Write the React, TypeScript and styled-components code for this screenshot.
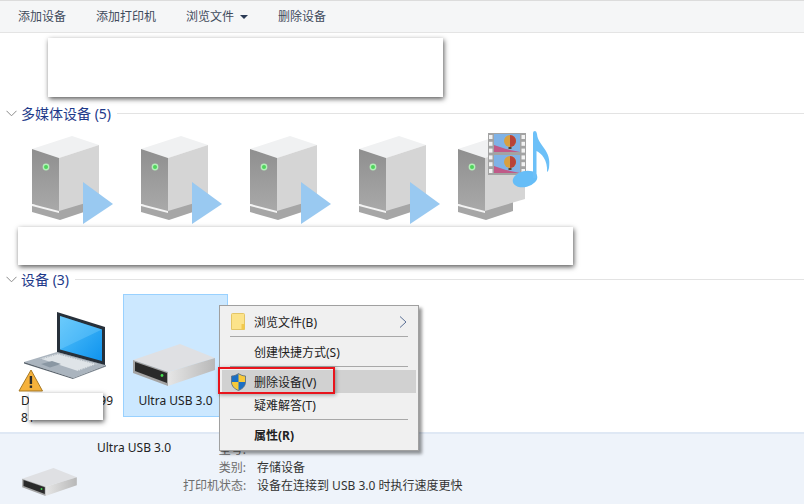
import React from 'react';
import styled, { createGlobalStyle } from 'styled-components';

const GlobalStyle = createGlobalStyle`
  html, body {
    margin: 0;
    padding: 0;
    background: #fff;
  }
  body {
    font-family: "Noto Sans", "Noto Sans CJK SC", sans-serif;
    font-size: 12px;
  }
`;

const Page = styled.div`
  position: relative;
  display: flex;
  flex-direction: column;
  width: 804px;
  height: 504px;
  overflow: hidden;
  background: #fff;
`;

const Toolbar = styled.div`
  display: flex;
  align-items: center;
  gap: 30px;
  height: 31px;
  padding-left: 18px;
  background: #f5f6f7;
  border-top: 1px solid #dcdcdc;
  border-bottom: 1px solid #e4e4e4;
`;

const ToolButton = styled.span`
  display: flex;
  align-items: center;
  color: #3f4b5c;
  line-height: 16px;
`;

const Caret = styled.i`
  width: 0;
  height: 0;
  margin-left: 6px;
  border-left: 4px solid transparent;
  border-right: 4px solid transparent;
  border-top: 4px solid #2b3a55;
`;

const SectionHeader = styled.div<{ $top: number }>`
  display: flex;
  align-items: center;
  height: 20px;
  margin-top: ${({ $top }) => $top}px;
  padding-left: 6px;
  color: #1e3a8a;
  font-size: 14px;
  white-space: nowrap;

  &::after {
    content: '';
    flex: 1;
    height: 1px;
    margin-left: 6px;
    background: #e3e3e3;
  }
`;

const SectionTitle = styled.span`
  margin-left: 4px;
`;

const MediaRow = styled.div`
  display: flex;
  gap: 19px;
  height: 100px;
  margin-top: 7px;
  padding-left: 28px;

  svg:last-child {
    margin-left: -10px;
  }
`;

const DeviceRow = styled.div`
  display: flex;
  align-items: flex-start;
  gap: 10px;
  margin-top: 5px;
  padding-left: 15px;
`;

const Tile = styled.div<{ $width: number; $selected?: boolean }>`
  box-sizing: border-box;
  width: ${({ $width }) => $width}px;
  height: ${({ $selected }) => ($selected ? '123px' : 'auto')};
  background: ${({ $selected }) => ($selected ? '#cce8ff' : 'transparent')};
  border: 1px solid ${({ $selected }) => ($selected ? '#99d1ff' : 'transparent')};

  svg {
    display: block;
  }
`;

const TileLabel = styled.div`
  color: #222;
  line-height: 17px;
  text-align: center;
  white-space: nowrap;
`;

const SplitLine = styled.div`
  display: flex;
  justify-content: space-between;
  width: 92px;
  margin-left: 5px;
  color: #222;
  line-height: 17px;
`;

const WrapLine = styled.div`
  margin-left: 5px;
  color: #222;
  line-height: 17px;
`;

const Details = styled.div`
  display: flex;
  box-sizing: border-box;
  height: 72px;
  margin-top: auto;
  padding: 6px 0 0 22px;
  background: #eef3fa;
  border-top: 2px solid #dfe8f4;
`;

const Thumb = styled.div`
  width: 75px;
  padding-top: 28px;
`;

const DeviceName = styled.div`
  width: 86px;
  color: #222;
  line-height: 16px;
`;

const Properties = styled.div`
  display: grid;
  grid-template-columns: 63px auto;
  grid-auto-rows: 18px;
  column-gap: 11px;
  align-items: center;
  align-self: flex-start;
  white-space: nowrap;
`;

const PropLabel = styled.span`
  color: #6d6d6d;
  text-align: right;
`;

const PropValue = styled.span`
  color: #333;
`;

const Redaction = styled.div<{ $x: number; $y: number; $w: number; $h: number }>`
  position: absolute;
  left: ${({ $x }) => $x}px;
  top: ${({ $y }) => $y}px;
  width: ${({ $w }) => $w}px;
  height: ${({ $h }) => $h}px;
  background: #fff;
  box-shadow: 1px 2px 5px rgba(0, 0, 0, 0.65);
`;

const Menu = styled.div`
  position: absolute;
  left: 219px;
  top: 305px;
  box-sizing: border-box;
  width: 200px;
  height: 146px;
  padding: 4px 2px;
  background: #f0f0f0;
  border: 1px solid #a0a0a0;
  box-shadow: 3px 3px 3px rgba(0, 0, 0, 0.4);
`;

const MenuItem = styled.div<{ $active?: boolean; $bold?: boolean }>`
  display: flex;
  align-items: center;
  height: 23px;
  padding: 0 9px;
  color: #222;
  font-weight: ${({ $bold }) => ($bold ? 700 : 400)};
  background: ${({ $active }) => ($active ? '#d1d1d1' : 'transparent')};
`;

const MenuIconSlot = styled.span`
  display: flex;
  align-items: center;
  width: 23px;
  height: 18px;
`;

const Submenu = styled.svg`
  margin-left: auto;
`;

const MenuSeparator = styled.div`
  height: 1px;
  margin: 3px 8px 3px 8px;
  background: #a8a8a8;
`;

const Highlight = styled.div`
  position: absolute;
  left: 218px;
  top: 367px;
  box-sizing: border-box;
  width: 117px;
  height: 27px;
  border: 2px solid #e8141c;
  box-shadow: 1px 1px 4px rgba(0, 0, 0, 0.35);
`;

const Chevron = () => (
  <svg width="11" height="7" viewBox="0 0 11 7">
    <path d="M0.5 0.8 L5.5 5.8 L10.5 0.8" fill="none" stroke="#8a8a8a" strokeWidth="1" />
  </svg>
);

const ServerBody = () => (
  <>
    <path d="M32 205 L32 212 L60 220 L87 211 L87 200 Z" fill="#a6a6a6" />
    <path d="M32 149 L72 136 L99 145 L59 158 Z" fill="#f0f1f2" />
    <path d="M32 149 L59 158 L59 211 L32 204 Z" fill="url(#serverFront)" />
    <path d="M59 158 L99 145 L99 199 L59 211 Z" fill="#d5d5d5" />
    <path d="M32 204 L59 211 L59 213 L32 206 Z" fill="#f4f4f4" />
    <circle cx="46" cy="167" r="3.4" fill="#b4f0b8" />
    <circle cx="46" cy="167" r="2" fill="#4fd45c" />
  </>
);

const ServerDefs = () => (
  <defs>
    <linearGradient id="serverFront" x1="0" y1="0" x2="0" y2="1">
      <stop offset="0" stopColor="#8f8f8f" />
      <stop offset="1" stopColor="#a9a9a9" />
    </linearGradient>
  </defs>
);

const StreamServer = () => (
  <svg width="90" height="100" viewBox="28 130 90 100">
    <ServerDefs />
    <ServerBody />
    <path d="M83 182 L113 204 L83 224 Z" fill="#99c9f1" />
  </svg>
);

const FilmFrame = ({ y }: { y: number }) => (
  <>
    <rect x="68" y={y} width="26" height="18" fill="#7fb2e6" />
    <path d={`M68 ${y + 18} L68 ${y + 11} L80 ${y + 15} L94 ${y + 18} Z`} fill="#c05a88" />
    <circle cx="84" cy={y + 7} r="6" fill="#d9a040" />
    <path d={`M84 ${y + 1} A6 6 0 0 1 84 ${y + 13} Z`} fill="#b8433a" />
    <rect x="82.5" y={y + 13} width="3" height="2" fill="#55402e" />
  </>
);

const MediaServer = () => (
  <svg width="125" height="100" viewBox="28 130 125 100" style={{ overflow: 'visible' }}>
    <ServerDefs />
    <ServerBody />
    <rect x="62" y="133" width="38" height="42" fill="#a3a3a3" />
    {[0, 1, 2, 3, 4, 5].map(i => (
      <React.Fragment key={i}>
        <rect x="63" y={135 + i * 6.8} width="3.5" height="4" fill="#f2f2f2" />
        <rect x="95.5" y={135 + i * 6.8} width="3.5" height="4" fill="#f2f2f2" />
      </React.Fragment>
    ))}
    <FilmFrame y={134} />
    <FilmFrame y={155} />
    <ellipse cx="99" cy="179" rx="12.5" ry="8" transform="rotate(-14 99 179)" fill="#66bdf7" />
    <path
      d="M107 178 L107 133 Q107 131 109 131 Q110.5 131 111 134 C112 146 126 150 123 168 Q122.5 171 121 172 C122 160 115 153 110.5 151 L110.5 178 Z"
      fill="#6cc0f8"
    />
  </svg>
);

const LaptopIcon = () => (
  <svg width="96" height="97" viewBox="16 295 96 97">
    <defs>
      <linearGradient id="laptopScreen" x1="0" y1="0" x2="1" y2="1">
        <stop offset="0" stopColor="#5cc4fa" />
        <stop offset="0.55" stopColor="#2fa9f4" />
        <stop offset="1" stopColor="#0f93ee" />
      </linearGradient>
    </defs>
    <path d="M24 362 L57 352 L106 365 L73 378 Z" fill="#aab4be" />
    <path d="M24 362 L73 378 L73 379 L24 363.5 Z" fill="#59636d" />
    <path d="M73 378 L106 365 L106 366.5 L73 379 Z" fill="#7b858f" />
    <path d="M40 358.5 L58 353.5 L97 364 L78 371 Z" fill="#dfe4e8" />
    <path d="M41 359 L58 354 L96 364.2 L78 370.5" fill="none" stroke="#8d98a3" strokeWidth="0.5" strokeDasharray="1.5 1" />
    <path d="M41 364 L52 361 L61 364 L50 367.5 Z" fill="#8a97a3" />
    <path d="M57 312 L105 327 L105 365 L57 352 Z" fill="#27303a" />
    <path d="M60 316 L102 329.5 L102 361 L60 349.5 Z" fill="url(#laptopScreen)" />
    <path d="M60 316 L102 329.5 L60 349.5 Z" fill="#8ddcff" opacity="0.3" />
    <path d="M31 370 L42.5 391 L19 391 Z" fill="#f6b23c" stroke="#a97a24" strokeWidth="1" strokeLinejoin="round" />
    <rect x="29.7" y="376" width="2.4" height="8" fill="#2b2b2b" />
    <rect x="29.7" y="385.5" width="2.4" height="2.4" fill="#2b2b2b" />
  </svg>
);

const DriveIcon = ({ width, height, viewBox }: { width: number; height: number; viewBox: string }) => (
  <svg width={width} height={height} viewBox={viewBox}>
    <defs>
      <linearGradient id="driveSide" x1="0" y1="0" x2="1" y2="0">
        <stop offset="0" stopColor="#e6e6e6" />
        <stop offset="1" stopColor="#b8b8b8" />
      </linearGradient>
    </defs>
    <path d="M133 360 L180 344 L215 358 L168 372 Z" fill="#dfe0e3" />
    <path d="M168 372 L215 358 L215 370 L168 386 Z" fill="url(#driveSide)" />
    <path d="M133 360 L168 372 L168 386 L133 373 Z" fill="#a4a4a4" />
    <path d="M135 362 L167 373 L167 383 L135 371 Z" fill="#2a2a2a" />
    <circle cx="162" cy="375.5" r="1.4" fill="#45e04f" />
  </svg>
);

const FolderIcon = () => (
  <svg width="14" height="17" viewBox="0 0 14 17">
    <path d="M0.5 1.5 Q0.5 0.5 1.5 0.5 L12.5 0.5 Q13.5 0.5 13.5 1.5 L13.5 16.5 L0.5 16.5 Z" fill="#fce38a" stroke="#e3c566" />
    <rect x="10.5" y="11" width="3" height="5.5" fill="#f2c94c" />
  </svg>
);

const ShieldIcon = () => (
  <svg width="15" height="18" viewBox="0 0 15 18">
    <defs>
      <clipPath id="shieldOutline">
        <path d="M7.5 0.5 C5.5 2 3 3 0.5 3 L0.5 9 C0.5 13 3.5 16 7.5 17.5 C11.5 16 14.5 13 14.5 9 L14.5 3 C12 3 9.5 2 7.5 0.5 Z" />
      </clipPath>
    </defs>
    <g clipPath="url(#shieldOutline)">
      <rect width="15" height="18" fill="#1c6fc4" />
      <rect x="7.5" y="0" width="8" height="9" fill="#f8c93a" />
      <rect x="0" y="9" width="7.5" height="9" fill="#f8c93a" />
    </g>
    <path d="M7.5 0.5 C5.5 2 3 3 0.5 3 L0.5 9 C0.5 13 3.5 16 7.5 17.5 C11.5 16 14.5 13 14.5 9 L14.5 3 C12 3 9.5 2 7.5 0.5 Z" fill="none" stroke="#5f6f80" strokeWidth="0.8" />
  </svg>
);

export default function App() {
  return (
    <Page>
      <GlobalStyle />
      <Toolbar>
        <ToolButton>添加设备</ToolButton>
        <ToolButton>添加打印机</ToolButton>
        <ToolButton>
          浏览文件
          <Caret />
        </ToolButton>
        <ToolButton>删除设备</ToolButton>
      </Toolbar>

      <SectionHeader $top={70}>
        <Chevron />
        <SectionTitle>多媒体设备 (5)</SectionTitle>
      </SectionHeader>
      <MediaRow>
        <StreamServer />
        <StreamServer />
        <StreamServer />
        <StreamServer />
        <MediaServer />
      </MediaRow>

      <SectionHeader $top={39}>
        <Chevron />
        <SectionTitle>设备 (3)</SectionTitle>
      </SectionHeader>
      <DeviceRow>
        <Tile $width={98}>
          <LaptopIcon />
          <SplitLine>
            <span>D</span>
            <span>99</span>
          </SplitLine>
          <WrapLine>81</WrapLine>
        </Tile>
        <Tile $width={105} $selected>
          <DriveIcon width={103} height={97} viewBox="124 295 103 97" />
          <TileLabel>Ultra USB 3.0</TileLabel>
        </Tile>
      </DeviceRow>

      <Details>
        <Thumb>
          <DriveIcon width={55} height={28} viewBox="133 344 82 42" />
        </Thumb>
        <DeviceName>Ultra USB 3.0</DeviceName>
        <Properties>
          <PropLabel>型号:</PropLabel>
          <PropValue />
          <PropLabel>类别:</PropLabel>
          <PropValue>存储设备</PropValue>
          <PropLabel>打印机状态:</PropLabel>
          <PropValue>设备在连接到 USB 3.0 时执行速度更快</PropValue>
        </Properties>
      </Details>

      <Redaction $x={48} $y={38} $w={395} $h={59} />
      <Redaction $x={18} $y={227} $w={555} $h={38} />
      <Redaction $x={29} $y={393} $w={74} $h={27} />

      <Menu>
        <MenuItem>
          <MenuIconSlot>
            <FolderIcon />
          </MenuIconSlot>
          浏览文件(B)
          <Submenu width="8" height="12" viewBox="0 0 8 12">
            <path d="M1 0.5 L7 6 L1 11.5" fill="none" stroke="#5a6f95" strokeWidth="1" />
          </Submenu>
        </MenuItem>
        <MenuSeparator />
        <MenuItem>
          <MenuIconSlot />
          创建快捷方式(S)
        </MenuItem>
        <MenuSeparator />
        <MenuItem $active>
          <MenuIconSlot>
            <ShieldIcon />
          </MenuIconSlot>
          删除设备(V)
        </MenuItem>
        <MenuItem>
          <MenuIconSlot />
          疑难解答(T)
        </MenuItem>
        <MenuSeparator />
        <MenuItem $bold>
          <MenuIconSlot />
          属性(R)
        </MenuItem>
      </Menu>
      <Highlight />
    </Page>
  );
}
